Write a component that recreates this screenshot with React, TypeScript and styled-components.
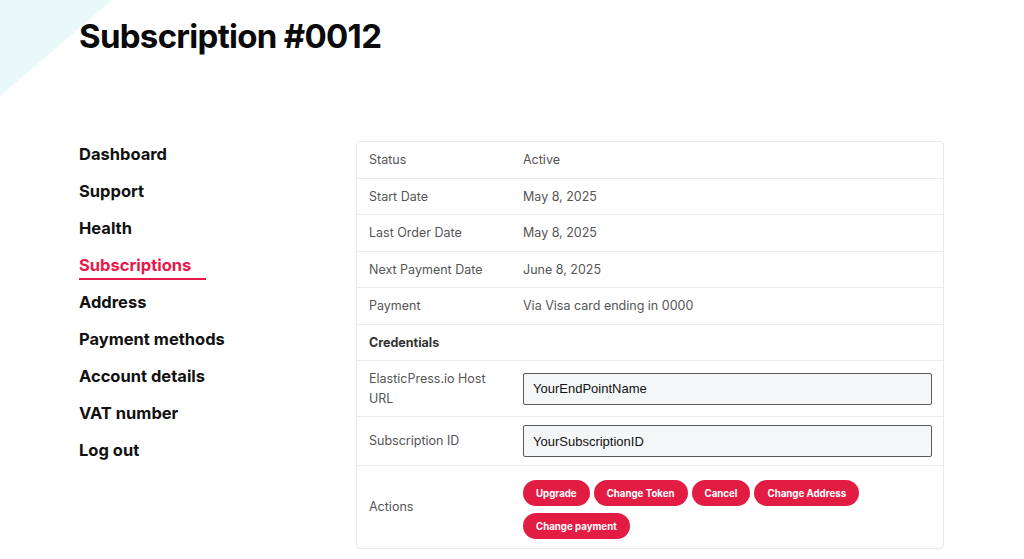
import React from "react";
import styled, { createGlobalStyle } from "styled-components";

const Global = createGlobalStyle`
  html, body { margin: 0; padding: 0; background: #ffffff; }
  body { font-family: "Inter", "Noto Sans", sans-serif; color: #111; }
  * { box-sizing: border-box; }
`;

const Page = styled.div`
  position: relative;
  width: 1024px;
  height: 559px;
  overflow: hidden;
  background: #ffffff;
`;

const Corner = styled.svg`
  position: absolute;
  left: 0;
  top: 0;
  width: 120px;
  height: 100px;
  z-index: 0;
`;

const Content = styled.div`
  position: relative;
  z-index: 1;
  padding: 14px 0 0 79px;
`;

const Title = styled.h1`
  margin: 0;
  font-family: "Inter", "Liberation Sans", sans-serif;
  font-weight: 700;
  font-size: 33px;
  line-height: 44px;
  letter-spacing: -0.7px;
  color: #0a0a0a;
`;

const Main = styled.div`
  display: flex;
  margin-top: 77px;
`;

const Nav = styled.nav`
  width: 277px;
  display: flex;
  flex-direction: column;
  padding-top: 1px;
`;

const NavItem = styled.a<{ $active?: boolean }>`
  position: relative;
  display: block;
  height: 37px;
  line-height: 37px;
  font-size: 16.5px;
  font-weight: 700;
  letter-spacing: 0;
  color: ${(p) => (p.$active ? "#e8194a" : "#111111")};
  text-decoration: none;
  ${(p) =>
    p.$active
      ? `&::after {
      content: "";
      position: absolute;
      left: 0;
      top: 31px;
      width: 127px;
      height: 2px;
      background: #e8194a;
    }`
      : ""}
`;

const Card = styled.div`
  margin-top: 6px;
  width: 588px;
  border: 1px solid #e9e9e9;
  border-radius: 4px;
  overflow: hidden;
`;

const Table = styled.table`
  width: 100%;
  border-collapse: collapse;
  font-family: "Inter", "Noto Sans", sans-serif;
  font-size: 12.5px;
  color: #555555;
`;

const Row = styled.tr`
  & + & > td { border-top: 1px solid #ececec; }
`;

const Label = styled.td<{ $bold?: boolean }>`
  width: 155px;
  padding: 8px 12px;
  line-height: 19.5px;
  vertical-align: middle;
  font-weight: ${(p) => (p.$bold ? 700 : 400)};
  color: ${(p) => (p.$bold ? "#333333" : "#555555")};
`;

const Value = styled.td`
  padding: 8px 11px;
  line-height: 19.5px;
  vertical-align: middle;
`;

const Input = styled.input`
  display: block;
  width: 409px;
  height: 32px;
  padding: 0 9px;
  border: 1px solid #5a5a5a;
  border-radius: 2px;
  background: #f5f6f8;
  font-family: "Liberation Sans", Arial, sans-serif;
  font-size: 13px;
  color: #111111;
  outline: none;
`;

const Buttons = styled.div`
  display: flex;
  flex-wrap: wrap;
  gap: 7px 4px;
  padding: 6px 0 1px;
  width: 360px;
`;

const Btn = styled.button`
  height: 26px;
  padding: 0 13px;
  border: none;
  border-radius: 13px;
  background: #e31c44;
  color: #ffffff;
  font-family: "Inter", "Noto Sans", sans-serif;
  font-weight: 700;
  font-size: 9.7px;
  cursor: pointer;
`;

const navItems = [
  "Dashboard",
  "Support",
  "Health",
  "Subscriptions",
  "Address",
  "Payment methods",
  "Account details",
  "VAT number",
  "Log out",
];

const rows: [string, string][] = [
  ["Status", "Active"],
  ["Start Date", "May 8, 2025"],
  ["Last Order Date", "May 8, 2025"],
  ["Next Payment Date", "June 8, 2025"],
  ["Payment", "Via Visa card ending in 0000"],
];

export default function App() {
  return (
    <Page>
      <Global />
      <Corner viewBox="0 0 120 100" aria-hidden>
        <polygon points="0,0 112,0 0,96" fill="#e9f8f8" />
      </Corner>
      <Content>
        <Title>Subscription #0012</Title>
        <Main>
          <Nav>
            {navItems.map((n) => (
              <NavItem key={n} $active={n === "Subscriptions"}>
                {n}
              </NavItem>
            ))}
          </Nav>
          <Card>
            <Table>
              <tbody>
                {rows.map(([l, v]) => (
                  <Row key={l}>
                    <Label>{l}</Label>
                    <Value>{v}</Value>
                  </Row>
                ))}
                <Row>
                  <Label $bold>Credentials</Label>
                  <Value />
                </Row>
                <Row>
                  <Label>ElasticPress.io Host URL</Label>
                  <Value>
                    <Input readOnly value="YourEndPointName" />
                  </Value>
                </Row>
                <Row>
                  <Label>Subscription ID</Label>
                  <Value>
                    <Input readOnly value="YourSubscriptionID" />
                  </Value>
                </Row>
                <Row>
                  <Label>Actions</Label>
                  <Value>
                    <Buttons>
                      <Btn>Upgrade</Btn>
                      <Btn>Change Token</Btn>
                      <Btn>Cancel</Btn>
                      <Btn>Change Address</Btn>
                      <Btn>Change payment</Btn>
                    </Buttons>
                  </Value>
                </Row>
              </tbody>
            </Table>
          </Card>
        </Main>
      </Content>
    </Page>
  );
}
